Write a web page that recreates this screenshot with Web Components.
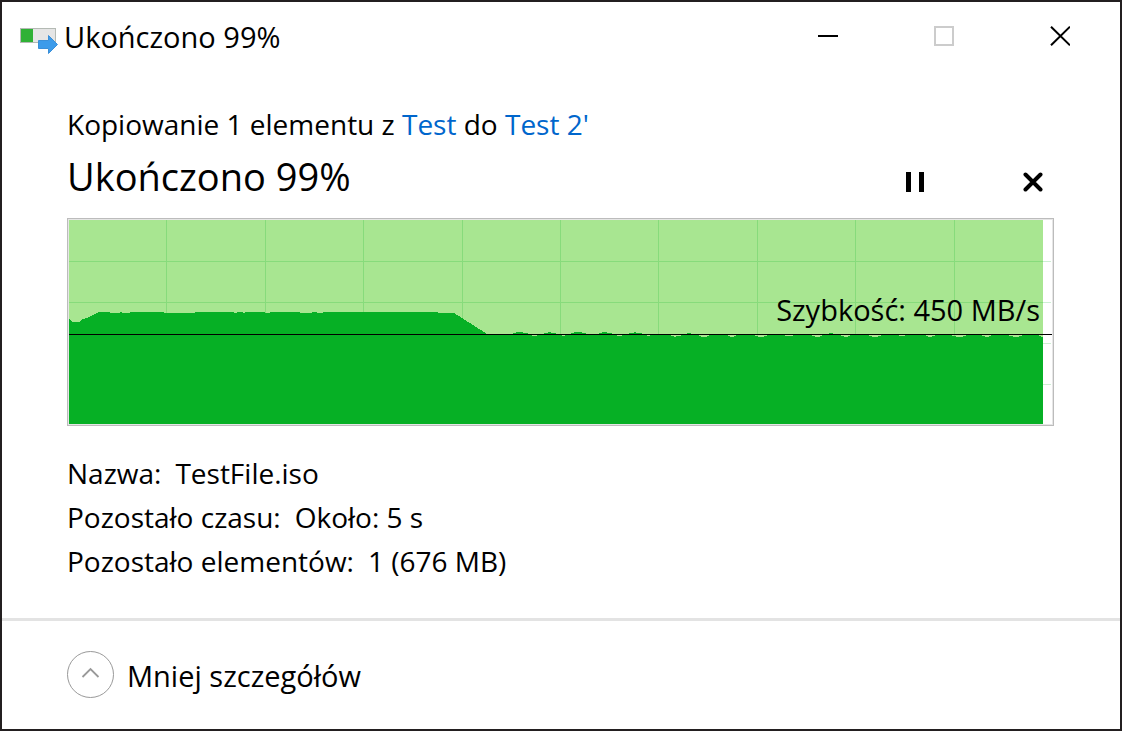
<!DOCTYPE html>
<html lang="pl">
<head>
<meta charset="utf-8">
<meta name="viewport" content="width=device-width, initial-scale=1">
<title>Ukończono 99%</title>
<style>
html, body { height: 100%; margin: 0; }
body { background: #fff; color: #000; font: 28px/44px "Open Sans", "Noto Sans", sans-serif; }
</style>
</head>
<body>
<copy-dialog>
  <title-bar slot="title">Ukończono 99%</title-bar>
  <copy-summary slot="body">Ukończono 99%</copy-summary>
  <speed-chart slot="body">Szybkość: 450 MB/s</speed-chart>
  <detail-list slot="body"></detail-list>
  <less-details slot="footer">Mniej szczegółów</less-details>
</copy-dialog>
<script>
const define = (name, html) => {
  const template = document.createElement('template');
  template.innerHTML = html;
  customElements.define(name, class extends HTMLElement {
    constructor() {
      super();
      this.attachShadow({ mode: 'open' }).append(template.content.cloneNode(true));
    }
  });
};

define('copy-dialog', `
<style>
:host { display: flex; flex-direction: column; box-sizing: border-box; min-height: 100%; border: 2px solid #231f20; background: #fff; }
main { flex: 1; padding: 32px 66px 32px 65px; }
footer { border-top: 3px solid #e3e3e3; padding: 30px 65px 31px; }
</style>
<slot name="title"></slot>
<main><slot name="body"></slot></main>
<footer><slot name="footer"></slot></footer>`);

define('title-bar', `
<style>
:host { display: flex; align-items: center; height: 68px; padding: 0 2px 0 18px; font-size: 29px; }
.icon { width: 38px; height: 28px; margin: 12px 6px 0 0; }
.name { flex: 1; padding-top: 2px; }
.controls { display: flex; }
button { display: grid; place-items: center; width: 116px; height: 68px; padding: 0; border: 0; background: none; color: #000; }
button:disabled { color: #ccc; }
button svg { width: 20px; height: 20px; fill: none; stroke: currentColor; stroke-width: 2; }
</style>
<svg class="icon" viewBox="0 0 38 28" aria-hidden="true">
  <rect x=".5" y=".5" width="35" height="14" fill="#e5e5e5" stroke="#b4bab4"/>
  <rect x="1" y="1" width="12" height="13" fill="#2fb135"/>
  <path d="M18.500 12.500H28.500V7.500L37.500 16.500L28.500 25.500V20.500H18.500Z" fill="#3c9bea" stroke="#3a8fd8"/>
</svg>
<span class="name"><slot></slot></span>
<div class="controls">
  <button type="button" aria-label="Minimalizuj"><svg viewBox="0 0 20 20"><path d="M0 10H20"/></svg></button>
  <button type="button" aria-label="Maksymalizuj" disabled><svg viewBox="0 0 20 20"><path d="M1 1H19V19H1Z"/></svg></button>
  <button type="button" aria-label="Zamknij"><svg viewBox="0 0 20 20"><path d="M1 .7L20 19.300M20 .7L1 19.300"/></svg></button>
</div>`);

define('copy-summary', `
<style>
:host { display: block; }
p, h1 { margin: 0; }
a { color: #0066cc; text-decoration: none; }
.row { display: flex; align-items: center; justify-content: space-between; padding-bottom: 12px; }
h1 { font-size: 38px; line-height: 60px; font-weight: 400; }
.actions { display: flex; gap: 78px; padding: 12px 1px 0 0; }
button { display: grid; place-items: center; width: 40px; height: 40px; padding: 0; border: 0; background: none; }
svg { width: 20px; height: 20px; }
</style>
<p>Kopiowanie 1 elementu z <a href="#test">Test</a> do <a href="#test2">Test 2'</a></p>
<div class="row">
  <h1><slot></slot></h1>
  <div class="actions">
    <button type="button" aria-label="Wstrzymaj"><svg viewBox="0 0 20 20"><path d="M1 0H6V20H1ZM14 0H19V20H14Z"/></svg></button>
    <button type="button" aria-label="Anuluj"><svg viewBox="0 0 20 20"><path d="M2.500 2.500L17.500 17.500M17.500 2.500L2.500 17.500" stroke="#000" stroke-width="4" stroke-linecap="round"/></svg></button>
  </div>
</div>`);

define('speed-chart', `
<style>
:host { display: block; position: relative; box-sizing: border-box; height: 208px; border: 1px solid #bcbcbc; padding: 1px; background: #e6e6e6; font-size: 29px; }
svg { display: block; width: 100%; height: 100%; background: #fff; }
.speed { position: absolute; right: 13px; bottom: 93px; }
</style>
<svg viewBox="0 0 983 204" preserveAspectRatio="none" shape-rendering="crispEdges" aria-hidden="true">
  <path d="M0 0H974V204H0Z" fill="#a8e691"/>
  <path d="M97.500 0V204M196.500 0V204M294.500 0V204M393.500 0V204M491.500 0V204M589.500 0V204M688.500 0V204M786.500 0V204M885.500 0V204M0 41.500H982M0 82.500H982M0 123.500H982M0 164.500H982" fill="none" stroke="#06b025" stroke-opacity=".2"/>
  <path d="M0 99L4 102H10L14 99L20 97L30 92H41V93H51V92H53V93H61V92H95V93H126V92H165V93H168V92H174V93H176V92H196V93H201V92H231V93H243V92H248V93H254V92H369V93H385L393 98L418 114H444V113H447V112H454V113H459V115H463V116H468V115H475V113H479V112H482V113H487V115H493V116H496V115H502V113H505V112H513V113H517V115H530V113H533V112H538V113H543V115H548V116H553V115H560V113H565V112H567V113H573V115H578V116H581V115H602V116H605V117H607V116H612V115H618V113H622V115H630V116H632V117H638V116H640V115H659V116H661V117H665V116H667V115H686V116H689V117H695V116H698V115H716V116H724V115H743V116H746V117H751V116H753V115H760V113H764V115H772V116H775V117H779V116H781V115H800V116H803V117H809V116H812V115H830V116H836V115H857V116H859V117H863V116H866V115H883V116H887V117H894V116H897V115H913V116H916V117H920V116H922V115H940V116H944V117H950V116H953V115H970V116H972V117H974V204H0Z" fill="#06b025"/>
  <path d="M0 114.500H983" stroke="#000"/>
</svg>
<span class="speed"><slot></slot></span>`);

define('detail-list', `
<style>
:host { display: block; padding-top: 25px; }
dl { margin: 0; }
div { display: flex; gap: 14px; }
dd { margin: 0; }
</style>
<dl>
  <div><dt>Nazwa:</dt><dd>TestFile.iso</dd></div>
  <div><dt>Pozostało czasu:</dt><dd>Około: 5 s</dd></div>
  <div><dt>Pozostało elementów:</dt><dd>1 (676 MB)</dd></div>
</dl>`);

define('less-details', `
<style>
:host { display: block; font-size: 29px; }
button { display: flex; align-items: center; gap: 13px; padding: 0; border: 0; background: none; color: inherit; font: inherit; }
svg { width: 47px; height: 47px; fill: none; stroke: #999; }
span { padding-top: 2px; }
</style>
<button type="button" aria-expanded="true">
  <svg viewBox="0 0 47 47" aria-hidden="true"><circle cx="23.500" cy="23.500" r="23"/><path d="M15.500 26L23.500 18L31.500 26" stroke-width="1.800"/></svg>
  <span><slot></slot></span>
</button>`);
</script>
</body>
</html>
